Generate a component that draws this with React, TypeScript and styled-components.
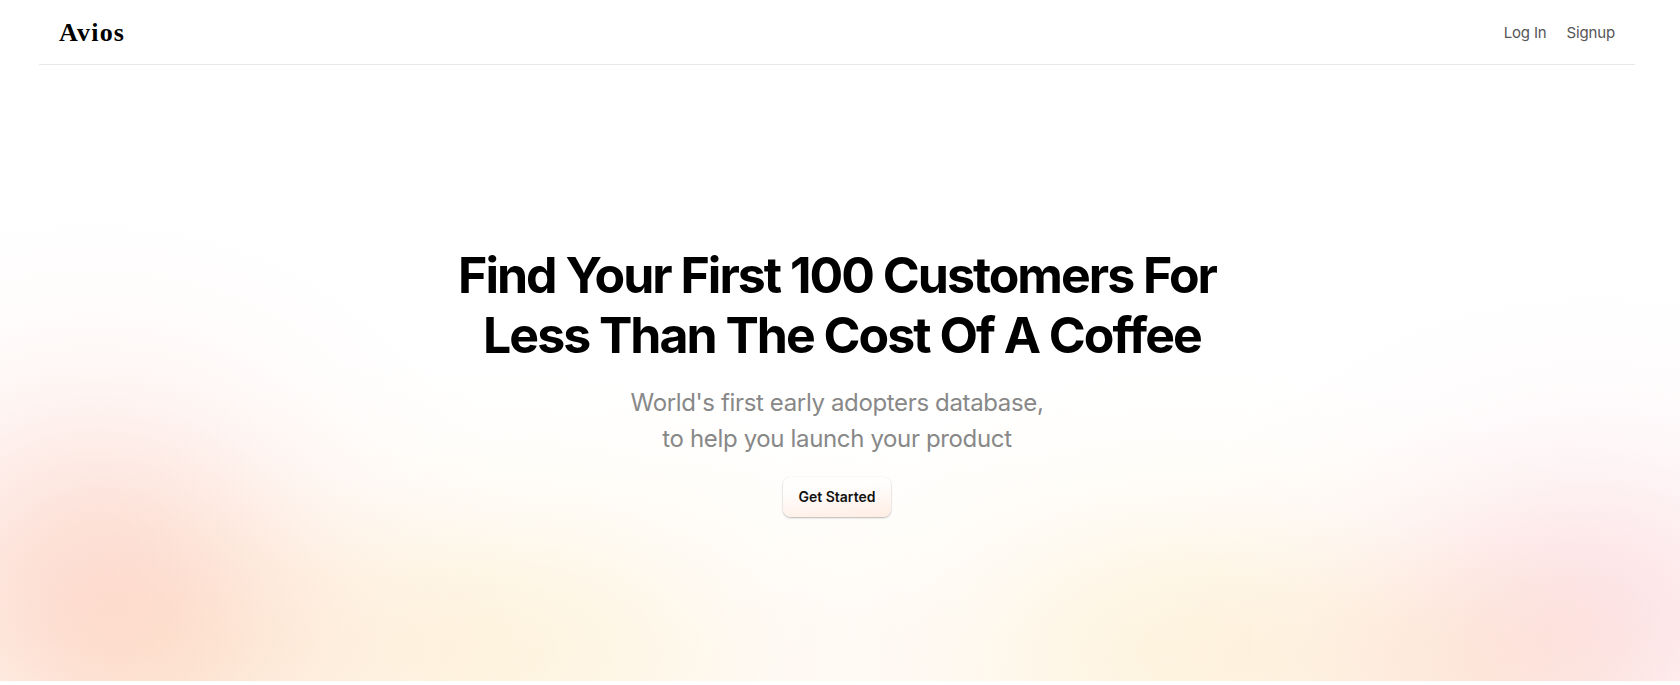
import styled, { createGlobalStyle } from "styled-components";

interface Glow {
  x: number;
  y: number;
  rx: number;
  ry: number;
  rgb: string;
  alpha: number;
}

const glows: Glow[] = [
  { x: 95, y: 570, rx: 430, ry: 380, rgb: "249, 165, 145", alpha: 0.32 },
  { x: 150, y: 660, rx: 420, ry: 280, rgb: "252, 190, 120", alpha: 0.2 },
  { x: 490, y: 650, rx: 500, ry: 310, rgb: "250, 208, 120", alpha: 0.22 },
  { x: 1190, y: 650, rx: 470, ry: 310, rgb: "250, 208, 120", alpha: 0.22 },
  { x: 1470, y: 680, rx: 390, ry: 260, rgb: "252, 180, 120", alpha: 0.16 },
  { x: 1595, y: 610, rx: 430, ry: 340, rgb: "246, 155, 170", alpha: 0.25 },
  { x: 840, y: 690, rx: 700, ry: 360, rgb: "250, 190, 120", alpha: 0.05 },
];

const steps = [0, 0.1, 0.2, 0.3, 0.4, 0.5, 0.6, 0.7, 0.8, 0.9, 1];

// bell-shaped falloff, so the glows melt into the page without an edge
const toGradient = ({ x, y, rx, ry, rgb, alpha }: Glow) => {
  const stops = steps.map((t) => {
    const a = t === 1 ? 0 : alpha * Math.exp(-4.5 * t * t);
    return `rgba(${rgb}, ${a.toFixed(4)}) ${t * 100}%`;
  });
  return `radial-gradient(${rx}px ${ry}px at ${x}px ${y}px, ${stops.join(", ")})`;
};

const GlobalStyles = createGlobalStyle`
  * {
    box-sizing: border-box;
  }

  body {
    margin: 0;
    background: #fff;
    font-family: Inter, sans-serif;
  }
`;

const Page = styled.div`
  display: flex;
  flex-direction: column;
  height: 681px;
  padding: 0 45px 0 39px;
  overflow: hidden;
  background: ${glows.map(toGradient).join(", ")}, #fff;
`;

const Header = styled.header`
  display: flex;
  align-items: center;
  justify-content: space-between;
  height: 65px;
  padding: 0 20px;
  border-bottom: 1px solid #e8e8e8;
`;

const Logo = styled.a`
  padding-top: 2px;
  font-family: "Liberation Serif", serif;
  font-size: 26px;
  font-weight: 700;
  letter-spacing: 1.2px;
  color: #000;
`;

const Nav = styled.nav`
  display: flex;
  gap: 20px;
`;

const NavLink = styled.a`
  font-size: 15px;
  letter-spacing: -0.15px;
  color: #555;
`;

const Hero = styled.main`
  display: flex;
  flex-direction: column;
  align-items: center;
  padding-top: 180px;
  text-align: center;
`;

const Title = styled.h1`
  margin: 0;
  font-size: 50px;
  font-weight: 700;
  line-height: 60px;
  letter-spacing: -2px;
  color: #000;
  white-space: pre;
`;

const Subtitle = styled.p`
  margin: 20px 0 0;
  font-size: 24px;
  line-height: 36px;
  letter-spacing: -0.36px;
  color: #888;
`;

const StartButton = styled.button`
  width: 108px;
  height: 40px;
  margin-top: 20px;
  padding: 0 0 1px;
  border: none;
  border-radius: 8px;
  background: linear-gradient(175deg, #fffefd 30%, #ffede4 100%);
  box-shadow: 0 1px 2px rgba(0, 0, 0, 0.28), 0 0 1px rgba(0, 0, 0, 0.12);
  font-family: inherit;
  font-size: 14px;
  font-weight: 600;
  color: #111;
`;

function App() {
  return (
    <>
      <GlobalStyles />
      <Page>
        <Header>
          <Logo>Avios</Logo>
          <Nav>
            <NavLink>Log In</NavLink>
            <NavLink>Signup</NavLink>
          </Nav>
        </Header>
        <Hero>
          <Title>
            Find Your First 100 Customers For
            <br />
            {" Less Than The Cost Of A Coffee"}
          </Title>
          <Subtitle>
            World's first early adopters database,
            <br />
            to help you launch your product
          </Subtitle>
          <StartButton>Get Started</StartButton>
        </Hero>
      </Page>
    </>
  );
}

export default App;
